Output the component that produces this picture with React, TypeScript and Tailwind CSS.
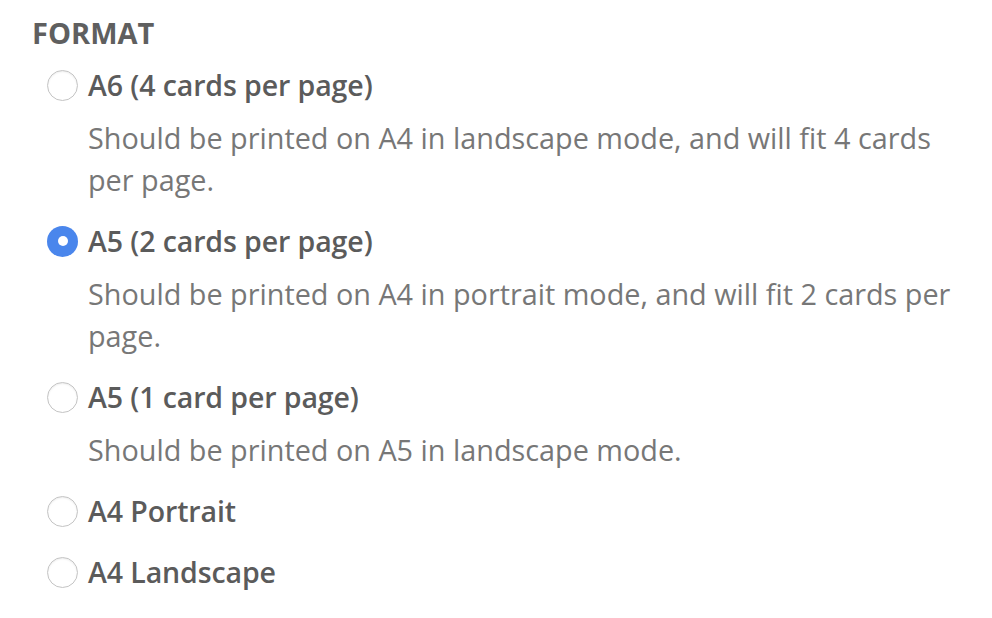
import React from 'react';

interface FormatOption {
  id: string;
  label: string;
  description?: string;
}

const options: FormatOption[] = [
  {
    id: 'a6',
    label: 'A6 (4 cards per page)',
    description: 'Should be printed on A4 in landscape mode, and will fit 4 cards per page.',
  },
  {
    id: 'a5-2',
    label: 'A5 (2 cards per page)',
    description: 'Should be printed on A4 in portrait mode, and will fit 2 cards per page.',
  },
  {
    id: 'a5-1',
    label: 'A5 (1 card per page)',
    description: 'Should be printed on A5 in landscape mode.',
  },
  { id: 'a4-portrait', label: 'A4 Portrait' },
  { id: 'a4-landscape', label: 'A4 Landscape' },
];

function Radio({ checked }: { checked: boolean }) {
  if (checked) {
    return (
      <span className="flex h-[31px] w-[31px] shrink-0 items-center justify-center rounded-full bg-[#4a86ec]">
        <span className="h-[10px] w-[10px] rounded-full bg-white" />
      </span>
    );
  }
  return (
    <span className="h-[31px] w-[31px] shrink-0 rounded-full border border-[#c4c4c4] bg-white shadow-[inset_0_1px_2px_rgba(0,0,0,0.08)]" />
  );
}

export default function App() {
  const [selected, setSelected] = React.useState('a5-2');

  return (
    <div className="min-h-screen bg-white pl-[32px] pt-[13px] font-['Open_Sans',sans-serif]">
      <h2 className="text-[29px] font-bold leading-[40px] text-[#5f5f5f]">FORMAT</h2>
      <div className="mt-[11px] flex flex-col gap-[19px] pl-[15px]">
        {options.map((opt) => (
          <div key={opt.id} className="flex flex-col">
            <label
              className="flex cursor-pointer items-center gap-[10px]"
              onClick={() => setSelected(opt.id)}
            >
              <Radio checked={selected === opt.id} />
              <span className="text-[28.5px] font-semibold leading-[42px] tracking-[-0.1px] text-[#5b5b5b]">
                {opt.label}
              </span>
            </label>
            {opt.description && (
              <p className="mt-[11px] max-w-[918px] pl-[41px] text-[28.8px] leading-[42px] text-[#777777]">
                {opt.description}
              </p>
            )}
          </div>
        ))}
      </div>
    </div>
  );
}
